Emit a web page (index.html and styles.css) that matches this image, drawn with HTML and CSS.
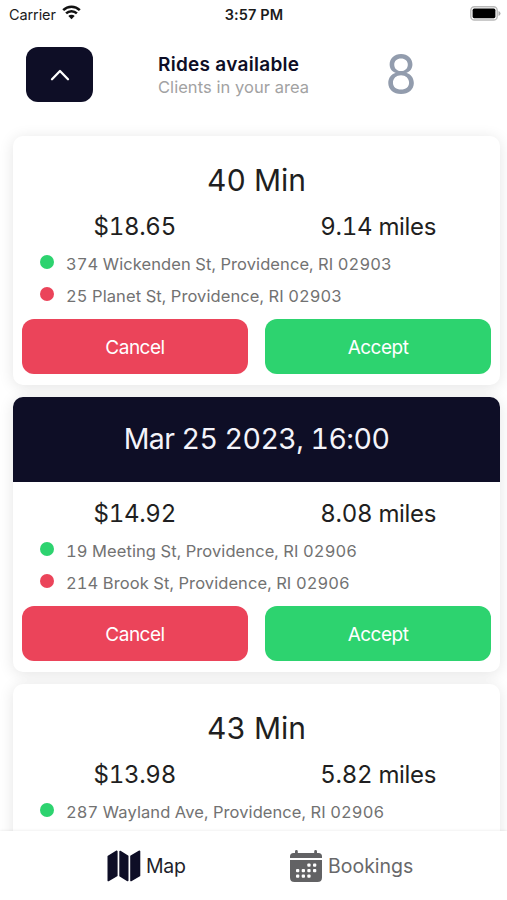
FILE: index.html
```
<!DOCTYPE html>
<html lang="en">
<head>
<meta charset="utf-8">
<title>Rides available</title>
<link rel="stylesheet" href="styles.css">
</head>
<body>
<div class="app">
  <div class="status">
    <div class="carrier"><span>Carrier</span>
      <svg class="wifi" width="19" height="15" viewBox="0 0 19 15"><g fill="none" stroke="#111" stroke-width="2.5"><path d="M1.2 5.1a11.7 11.7 0 0 1 16.6 0"/><path d="M4.1 8.4a7.6 7.6 0 0 1 10.8 0"/></g><path d="M9.5 14.2 6.3 11a4.5 4.5 0 0 1 6.4 0z" fill="#111"/></svg>
    </div>
    <div class="clock">3:57 PM</div>
    <svg class="battery" width="31" height="15" viewBox="0 0 31 15"><rect x=".8" y=".8" width="26.4" height="13.2" rx="3.6" fill="#fff" stroke="#b9b9b9" stroke-width="1.4"/><rect x="2.6" y="2.6" width="22.8" height="9.6" rx="1.6" fill="#000"/><path d="M28.5 5v5q2-.8 2-2.500t-2-2.500z" fill="#aaa"/></svg>
  </div>
  <header class="top">
    <button class="toggle" aria-label="Collapse"><svg width="20" height="12" viewBox="0 0 20 12"><path d="M2 10.200 10 2l8 8.200" fill="none" stroke="#fff" stroke-width="2.300" stroke-linecap="round" stroke-linejoin="round"/></svg></button>
    <div class="heading"><h1>Rides available</h1><p>Clients in your area</p></div>
    <div class="count">8</div>
  </header>
  <main class="list">
    <section class="card">
      <h2 class="title">40 Min</h2>
      <div class="stats"><span>$18.65</span><span>9.14 miles</span></div>
      <div class="stop"><i class="dot green"></i><span>374 Wickenden St, Providence, RI 02903</span></div>
      <div class="stop"><i class="dot red"></i><span>25 Planet St, Providence, RI 02903</span></div>
      <div class="actions"><button class="btn cancel">Cancel</button><button class="btn accept">Accept</button></div>
    </section>
    <section class="card">
      <h2 class="title scheduled">Mar 25 2023, 16:00</h2>
      <div class="stats"><span>$14.92</span><span>8.08 miles</span></div>
      <div class="stop"><i class="dot green"></i><span>19 Meeting St, Providence, RI 02906</span></div>
      <div class="stop"><i class="dot red"></i><span>214 Brook St, Providence, RI 02906</span></div>
      <div class="actions"><button class="btn cancel">Cancel</button><button class="btn accept">Accept</button></div>
    </section>
    <section class="card last">
      <h2 class="title">43 Min</h2>
      <div class="stats"><span>$13.98</span><span>5.82 miles</span></div>
      <div class="stop"><i class="dot green"></i><span>287 Wayland Ave, Providence, RI 02906</span></div>
    </section>
  </main>
  <nav class="tabs">
    <a class="tab active"><svg width="34" height="34" viewBox="0 0 34 34"><g fill="#0e0e26" stroke="#0e0e26" stroke-width="1.600" stroke-linejoin="round"><path d="M1.300 7.500 9.800 2.300V26.500L1.300 31.500z"/><path d="M13.100 2.500 20.700 7.300V31.500L13.100 26.700z"/><path d="M24 7.300 32.500 2.300V26.500L24 31.500z"/></g></svg><span>Map</span></a>
    <a class="tab"><svg width="34" height="34" viewBox="0 0 34 34"><path d="M1 9V7.500Q1 4 4.500 4H6V2.500a1.400 1.400 0 0 1 2.800 0V4h16.400V2.500a1.400 1.400 0 0 1 2.800 0V4h1.500Q33 4 33 7.500V9zM1 11h32v17.500q0 4.500-4.500 4.500h-23Q1 33 1 28.500z" fill="#626264"/><g fill="#fff"><rect x="18.300" y="14.500" width="3.300" height="3.300" rx="1"/><rect x="24" y="14.500" width="3.300" height="3.300" rx="1"/><rect x="7" y="20" width="3.300" height="3.300" rx="1"/><rect x="12.700" y="20" width="3.300" height="3.300" rx="1"/><rect x="18.300" y="20" width="3.300" height="3.300" rx="1"/><rect x="24" y="20" width="3.300" height="3.300" rx="1"/><rect x="7" y="25.500" width="3.300" height="3.300" rx="1"/><rect x="12.700" y="25.500" width="3.300" height="3.300" rx="1"/><rect x="18.300" y="25.500" width="3.300" height="3.300" rx="1"/></g></svg><span>Bookings</span></a>
  </nav>
</div>
</body>
</html>
```
FILE: styles.css
```
* { box-sizing: border-box; }
body { margin: 0; background: #fff; font-family: Inter, "Liberation Sans", sans-serif; color: #1f1f21; }
h1, h2, p { margin: 0; font-weight: 400; }
button { border: 0; padding: 0; font-family: inherit; }
.app { width: 507px; height: 900px; overflow: hidden; display: flex; flex-direction: column; }
.status { height: 28px; flex: none; display: grid; grid-template-columns: 1fr auto 1fr; align-items: center; padding: 0 6px 0 7px; font-size: 14.5px; color: #1b1b1b; }
.carrier { display: flex; align-items: center; gap: 6px; padding-left: 2px; letter-spacing: -.1px; }
.wifi { margin-top: -3px; }
.clock { font-weight: 600; letter-spacing: .1px; }
.battery { justify-self: end; margin-top: -2px; }
.top { height: 108px; flex: none; display: flex; padding: 19px 0 0 26px; }
.toggle { width: 67px; height: 55px; border-radius: 12px; background: #0e0e26; display: flex; align-items: center; justify-content: center; }
.heading { margin-left: 65px; width: 230px; padding-top: 6px; }
.heading h1 { font-size: 19px; line-height: 23px; font-weight: 600; color: #0e0e26; letter-spacing: .28px; }
.heading p { font-size: 16.500px; line-height: 22px; color: #a2a2a2; letter-spacing: .05px; }
.count { font-size: 55px; line-height: 54px; color: #929cad; margin-left: -4px; transform: scaleX(.93); }
.list { flex: 1; min-height: 0; display: flex; flex-direction: column; gap: 12px; padding: 0 7px 0 13px; }
.card { flex: none; background: #fff; border-radius: 10px; padding-bottom: 11px; box-shadow: 0 2px 15px rgba(0, 0, 0, .11); }
.last { height: 249px; }
.title { height: 59px; padding-top: 26px; line-height: 36px; font-size: 30px; text-align: center; font-variant-numeric: tabular-nums; }
.scheduled { height: 85px; padding-top: 24px; background: #0e0e26; color: #f4f4fa; border-radius: 10px 10px 0 0; font-size: 28.500px; letter-spacing: -.55px; }
.stats { height: 53px; padding-top: 10px; display: grid; grid-template-columns: 1fr 1fr; text-align: center; line-height: 44px; font-size: 24px; letter-spacing: -.3px; font-variant-numeric: tabular-nums; }
.stop { height: 32px; display: flex; align-items: center; padding-left: 27px; gap: 12px; font-size: 16.500px; letter-spacing: .08px; color: #727272; font-variant-numeric: tabular-nums; }
.dot { width: 14px; height: 14px; border-radius: 50%; margin-top: -5px; }
.green { background: #2dd36f; }
.red { background: #eb445a; }
.actions { display: flex; gap: 17px; padding: 7px 9px 0; }
.btn { flex: 1; height: 55px; border-radius: 12px; color: #fff; font-size: 19px; letter-spacing: -.5px; padding-top: 1px; }
.cancel { background: #eb445a; }
.accept { background: #2dd36f; }
.tabs { position: relative; height: 69px; flex: none; display: flex; background: #fff; box-shadow: 0 0 3px rgba(0, 0, 0, .1); padding-left: 107px; }
.tab { width: 182px; display: flex; align-items: center; gap: 5px; font-size: 19.5px; color: #68686a; }
.active { color: #1f1f2b; letter-spacing: -.3px; }
```
